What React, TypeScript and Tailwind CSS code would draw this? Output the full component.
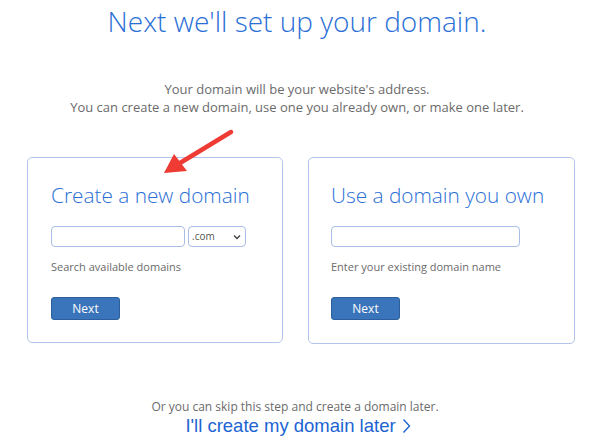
export default function App() {
  return (
    <div className="relative w-[600px] h-[441px] bg-white overflow-hidden" style={{ fontFamily: '"Open Sans", sans-serif' }}>
      <h1 className="pt-[2px] text-center text-[28px] leading-[38px] font-light text-[#2a6fd6] pr-[6px]">
        Next we'll set up your domain.
      </h1>
      <div className="mt-[40px] text-center text-[13px] leading-[18px] text-[#6b6b6b] pr-[6px]">
        <p>Your domain will be your website's address.</p>
        <p>You can create a new domain, use one you already own, or make one later.</p>
      </div>

      <div className="mt-[41px] ml-[27px] flex gap-[25px]">
        <div className="w-[256px] h-[186px] rounded-[5px] border border-[#b3c3ea] px-[23px] pt-[23px]">
          <h2 className="whitespace-nowrap text-[20.8px] leading-[28px] font-light text-[#2a6fd6]">Create a new domain</h2>
          <div className="mt-[17px] flex gap-[3px]">
            <div className="w-[134px] h-[21px] rounded-[4px] border border-[#a9bde6] bg-white" />
            <div className="w-[58px] h-[21px] rounded-[4px] border border-[#a9bde6] bg-white flex items-center justify-between pl-[3px] pr-[4px] text-[10px] text-[#555]">
              <span>.com</span>
              <svg width="8" height="6" viewBox="0 0 8 6"><path d="M1 1.5 4 4.5 7 1.5" fill="none" stroke="#444" strokeWidth="1.4" /></svg>
            </div>
          </div>
          <p className="mt-[12px] text-[11px] leading-[16px] text-[#6b6b6b]">Search available domains</p>
          <button className="mt-[22px] w-[69px] h-[23px] rounded-[3px] bg-[#3a74ba] border border-[#2d5f9f] text-white text-[12px] font-medium leading-none">
            Next
          </button>
        </div>

        <div className="w-[267px] h-[187px] rounded-[5px] border border-[#b3c3ea] px-[22px] pt-[23px]">
          <h2 className="whitespace-nowrap text-[20.8px] leading-[28px] font-light text-[#2a6fd6]">Use a domain you own</h2>
          <div className="mt-[17px] flex">
            <div className="w-[189px] h-[21px] rounded-[4px] border border-[#a9bde6] bg-white" />
          </div>
          <p className="mt-[12px] text-[11px] leading-[16px] text-[#6b6b6b]">Enter your existing domain name</p>
          <button className="mt-[22px] w-[69px] h-[23px] rounded-[3px] bg-[#3a74ba] border border-[#2d5f9f] text-white text-[12px] font-medium leading-none">
            Next
          </button>
        </div>
      </div>

      <div className="mt-[55px] text-center pr-[10px]">
        <p className="text-[12px] leading-[16px] text-[#6b6b6b]">Or you can skip this step and create a domain later.</p>
        <p className="pl-[6px] text-[18.5px] leading-[22px] text-[#2064d2] flex items-center justify-center gap-[6px]" style={{ fontFamily: '"Liberation Sans", Arial, sans-serif' }}>
          <span>I'll create my domain later</span>
          <svg width="9" height="16" viewBox="0 0 9 16"><path d="M1.5 1.5 7.5 8 1.5 14.5" fill="none" stroke="#2064d2" strokeWidth="1.4" /></svg>
        </p>
      </div>

      <svg className="absolute left-0 top-0 pointer-events-none" width="600" height="441">
        <line x1="231" y1="132" x2="180" y2="163" stroke="#ee3b33" strokeWidth="4.5" strokeLinecap="round" />
        <polygon points="164,173 174,154 187,171" fill="#ee3b33" />
      </svg>
    </div>
  );
}
